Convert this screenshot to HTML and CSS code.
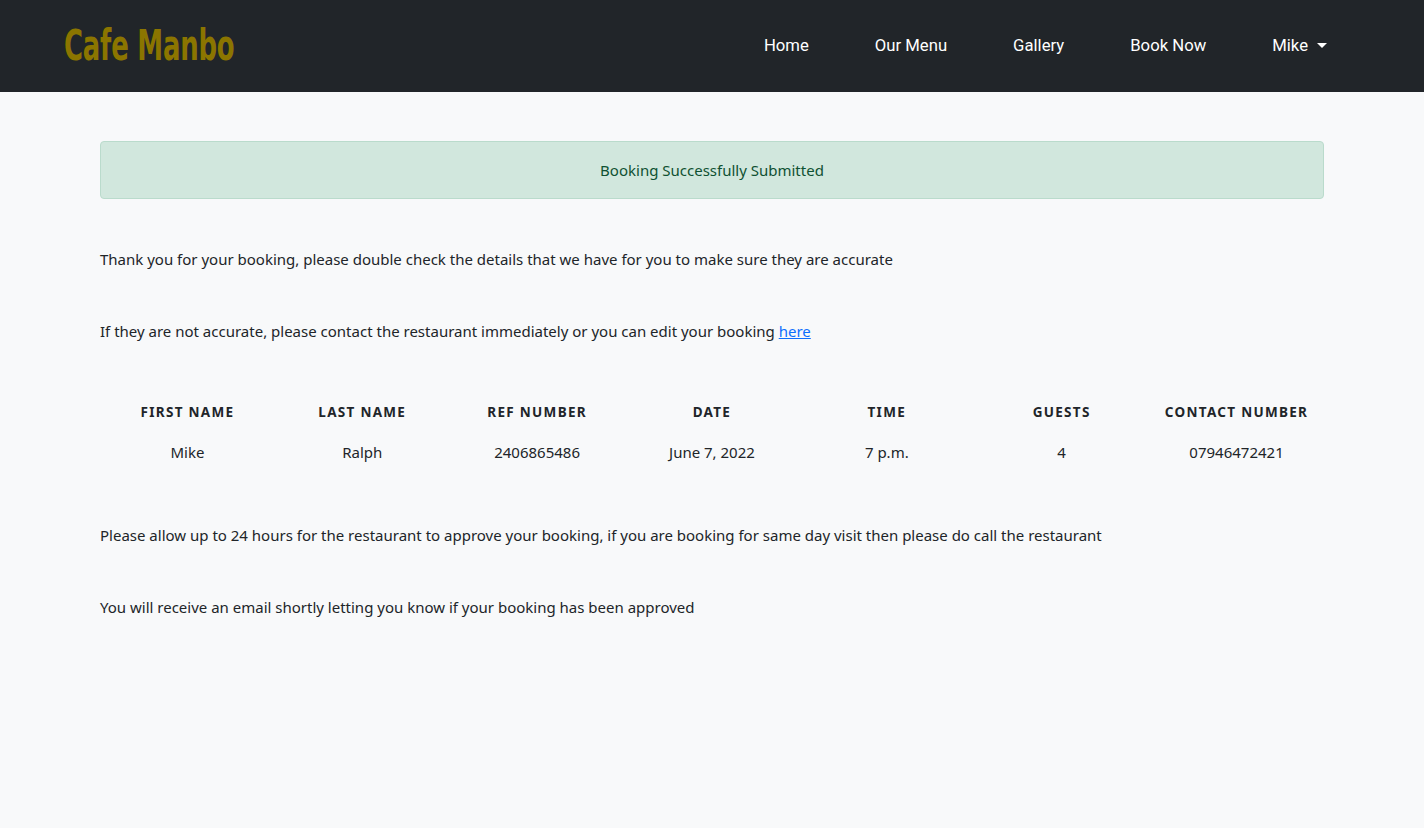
FILE: index.html
```html
<!DOCTYPE html>
<html lang="en">
<head>
<meta charset="utf-8">
<title>Cafe Manbo</title>
<link rel="stylesheet" href="styles.css">
</head>
<body>
<header class="navbar">
  <a class="brand" href="#">Cafe Manbo</a>
  <nav class="nav">
    <a class="nav-link" href="#">Home</a>
    <a class="nav-link" href="#">Our Menu</a>
    <a class="nav-link" href="#">Gallery</a>
    <a class="nav-link" href="#">Book Now</a>
    <a class="nav-link dropdown" href="#">Mike <span class="caret"></span></a>
  </nav>
</header>
<main class="content">
  <div class="alert">Booking Successfully Submitted</div>
  <p class="text">Thank you for your booking, please double check the details that we have for you to make sure they are accurate</p>
  <p class="text">If they are not accurate, please contact the restaurant immediately or you can edit your booking <a href="#" class="link">here</a></p>
  <table class="details">
    <thead>
      <tr><th>First Name</th><th>Last Name</th><th>Ref Number</th><th>Date</th><th>Time</th><th>Guests</th><th>Contact Number</th></tr>
    </thead>
    <tbody>
      <tr><td>Mike</td><td>Ralph</td><td>2406865486</td><td>June 7, 2022</td><td>7 p.m.</td><td>4</td><td>07946472421</td></tr>
    </tbody>
  </table>
  <p class="text">Please allow up to 24 hours for the restaurant to approve your booking, if you are booking for same day visit then please do call the restaurant</p>
  <p class="text">You will receive an email shortly letting you know if your booking has been approved</p>
</main>
</body>
</html>
```
FILE: styles.css
```css
* { box-sizing: border-box; }
html, body { margin: 0; padding: 0; }
body {
  background: #f8f9fa;
  color: #212529;
  font-family: "Noto Sans", "Open Sans", sans-serif;
  font-size: 15px;
  min-height: 828px;
}
.navbar {
  height: 92px;
  background: #212529;
  display: flex;
  align-items: center;
  justify-content: space-between;
  padding: 0 64px;
}
.brand {
  font-family: "DejaVu Sans Condensed", "DejaVu Sans", sans-serif;
  font-weight: 700;
  font-size: 43px;
  color: #8b7500;
  text-decoration: none;
  letter-spacing: -0.3px;
  display: inline-block;
  transform: scaleX(0.67);
  transform-origin: left center;
  margin-top: -3px;
}
.nav { display: flex; align-items: center; }
.nav-link {
  font-family: Roboto, sans-serif;
  font-size: 16.7px;
  color: #ffffff;
  text-decoration: none;
  padding: 0 33px;
  margin-top: -2px;
}
.dropdown { display: inline-flex; align-items: center; }
.caret {
  display: inline-block;
  width: 0; height: 0;
  border-left: 5px solid transparent;
  border-right: 5px solid transparent;
  border-top: 5px solid #ffffff;
  margin-left: 9px;
}
.content { padding: 49px 100px 0; }
.alert {
  height: 58px;
  background: #d1e7dd;
  border: 1px solid #badbcc;
  border-radius: 4px;
  color: #0f5132;
  display: flex;
  align-items: center;
  justify-content: center;
}
.text { margin: 0; line-height: 22px; }
.alert + .text { margin-top: 49px; }
.text + .text { margin-top: 50px; }
.link { color: #0d6efd; }
.details {
  width: 100%;
  border-collapse: collapse;
  table-layout: fixed;
  margin: 60px 0 61px;
}
.details th {
  font-size: 13.5px;
  font-weight: 700;
  text-transform: uppercase;
  letter-spacing: 1.3px;
  padding: 0 0 19px;
  line-height: 20px;
}
.details td {
  text-align: center;
  padding: 0;
  line-height: 22px;
}
```
